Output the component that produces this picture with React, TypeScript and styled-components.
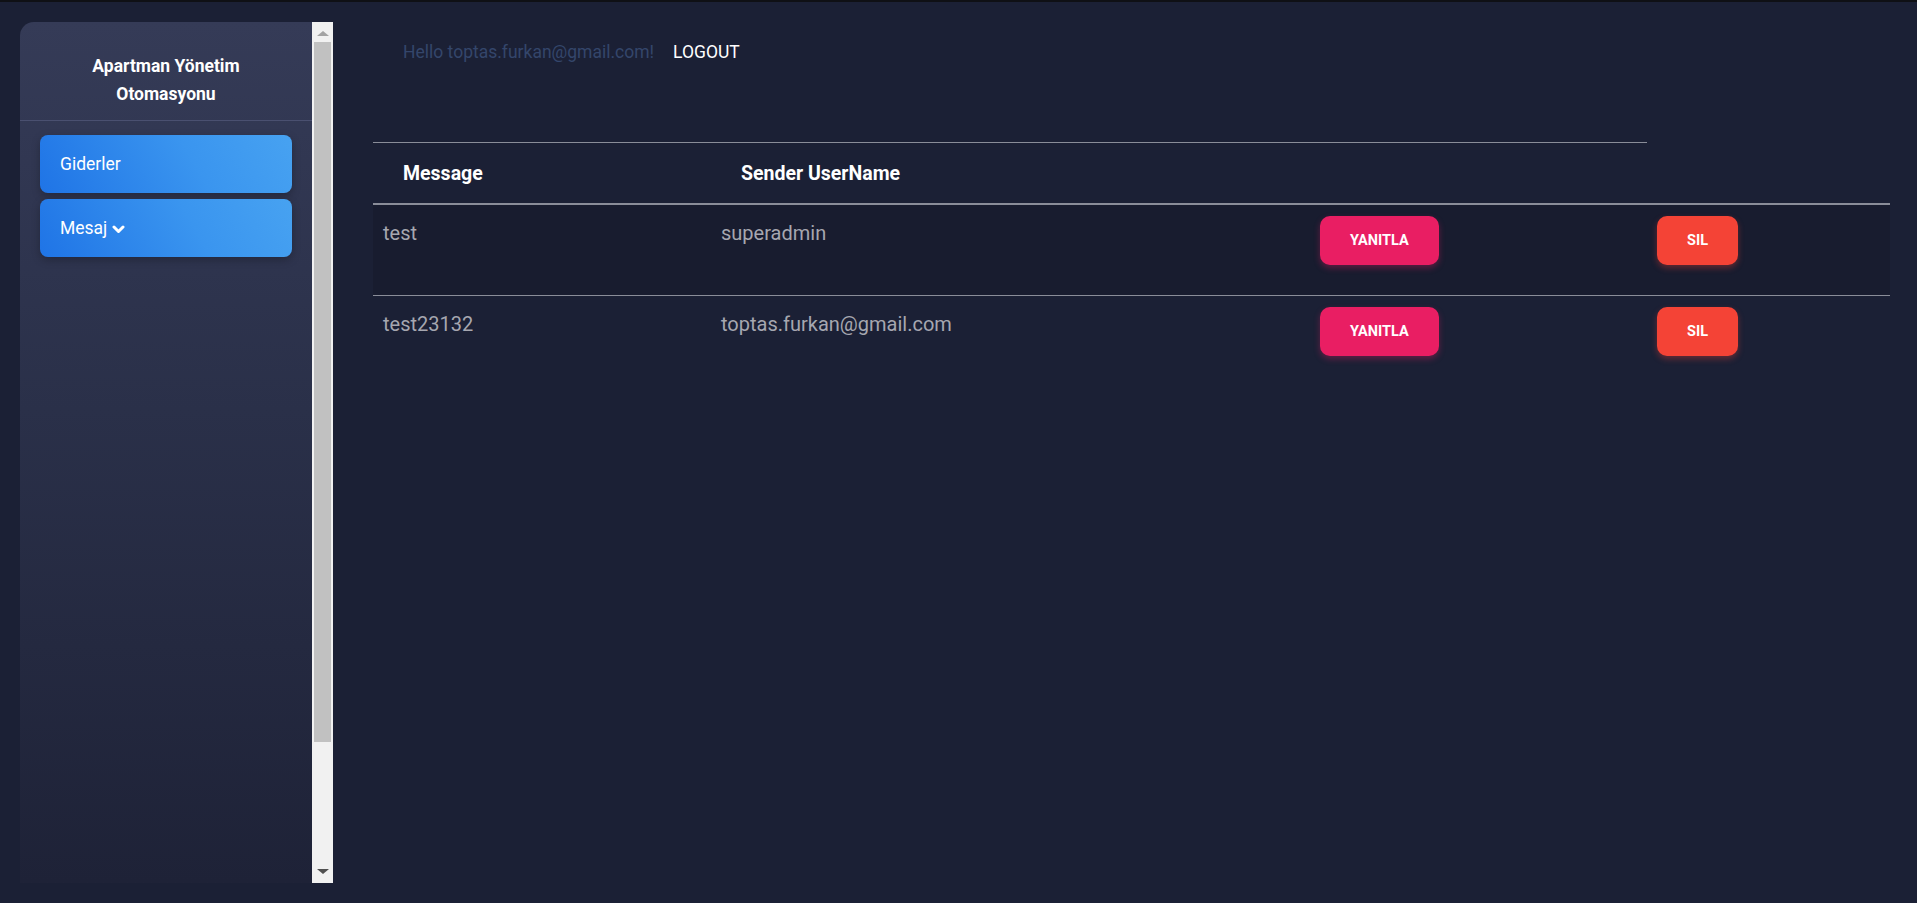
import styled, {createGlobalStyle} from "styled-components";

interface IMessage {
    id: number,
    text: string,
    sender: string
}

const messages: IMessage[] = [
    {id: 1, text: "test", sender: "superadmin"},
    {id: 2, text: "test23132", sender: "toptas.furkan@gmail.com"},
];

const GlobalStyle = createGlobalStyle`
  html, body {
    margin: 0;
    padding: 0;
    height: 100%;
  }

  body {
    background-color: #1b2035;
    font-family: Roboto, "Liberation Sans", sans-serif;
    border-top: 2px solid #0f1015;
    box-sizing: border-box;
  }
`;

const Page = styled.div`
  display: flex;
  height: 901px;
  overflow: hidden;
`;

const SidebarFrame = styled.div`
  display: flex;
  margin: 20px 0 18px 20px;
  height: 861px;
`;

const Sidebar = styled.aside`
  width: 292px;
  background: linear-gradient(180deg, #353b57 0%, #2a3049 45%, #1e2237 100%);
  border-top-left-radius: 14px;
  display: flex;
  flex-direction: column;
`;

const Brand = styled.div`
  color: #ffffff;
  font-weight: 700;
  font-size: 17.5px;
  line-height: 28px;
  text-align: center;
  padding: 30px 30px 12px;
  border-bottom: 1px solid #4a5070;
`;

const Menu = styled.nav`
  display: flex;
  flex-direction: column;
  gap: 6px;
  padding: 14px 20px;
`;

const MenuItem = styled.a`
  display: flex;
  align-items: center;
  gap: 5px;
  height: 58px;
  padding: 0 20px;
  border-radius: 8px;
  color: #ffffff;
  font-size: 17.5px;
  background: linear-gradient(60deg, #1f74e6 0%, #3a95ef 60%, #47a2f1 100%);
  box-shadow: 0 3px 8px rgba(0, 0, 0, 0.25);
  cursor: pointer;
  box-sizing: border-box;
`;

const Chevron = () =>
    <svg width="13" height="9" viewBox="0 0 13 9" style={{marginTop: 2}}>
        <polyline points="2,2 6.5,6.5 11,2" fill="none" stroke="#ffffff" strokeWidth="3"
                  strokeLinecap="round" strokeLinejoin="round"/>
    </svg>;

const ScrollTrack = styled.div`
  width: 21px;
  background: #f1f1f1;
  display: flex;
  flex-direction: column;
  align-items: center;
`;

const Arrow = styled.div<{ down?: boolean }>`
  width: 0;
  height: 0;
  margin: ${p => p.down ? "6px 0 9px" : "9px 0 6px"};
  border-left: 6px solid transparent;
  border-right: 6px solid transparent;
  ${p => p.down ? "border-top: 5px solid #505050;" : "border-bottom: 5px solid #a3a3a3;"}
`;

const Thumb = styled.div`
  width: 17px;
  height: 700px;
  background: #c1c1c1;
`;

const TrackSpacer = styled.div`
  flex: 1;
`;

const Main = styled.main`
  flex: 1;
  padding-left: 40px;
  padding-right: 27px;
  display: flex;
  flex-direction: column;
`;

const TopBar = styled.div`
  display: flex;
  align-items: center;
  gap: 19px;
  height: 100px;
  padding-left: 30px;
  padding-bottom: 1px;
  font-size: 17.5px;
`;

const Hello = styled.span`
  color: #34466b;
`;

const Logout = styled.a`
  color: #ffffff;
  cursor: pointer;
`;

const Spacer = styled.div`
  height: 39px;
`;

const Table = styled.div`
  display: grid;
  grid-template-columns: 338px 599px 337px 1fr;
`;

const HeadCell = styled.div<{ noTop?: boolean }>`
  height: 60px;
  display: flex;
  align-items: center;
  padding: 0 30px;
  color: #ffffff;
  font-weight: 700;
  font-size: 19.5px;
  border-top: 1px solid ${p => p.noTop ? "transparent" : "#8a8d99"};
  border-bottom: 2px solid #8a8d99;
`;

const Cell = styled.div<{ striped?: boolean, last?: boolean }>`
  min-height: 91px;
  box-sizing: border-box;
  padding: 13px 10px;
  color: #a6a7b0;
  font-size: 20px;
  line-height: 30px;
  background: ${p => p.striped ? "#181c2f" : "transparent"};
  border-bottom: 1px solid ${p => p.last ? "transparent" : "#8a8d99"};
`;

const ActionButton = styled.button<{ color: string, shadow: string }>`
  height: 49px;
  margin-top: -2px;
  padding: 0 30px;
  border: none;
  border-radius: 10px;
  background: ${p => p.color};
  color: #ffffff;
  font-family: Roboto, "Liberation Sans", sans-serif;
  font-weight: 700;
  font-size: 14.5px;
  text-transform: uppercase;
  box-shadow: 0 3px 6px ${p => p.shadow};
  cursor: pointer;
`;

const App = () => {
    return <>
        <GlobalStyle/>
        <Page>
            <SidebarFrame>
                <Sidebar>
                    <Brand>Apartman Yönetim<br/>Otomasyonu</Brand>
                    <Menu>
                        <MenuItem>Giderler</MenuItem>
                        <MenuItem>Mesaj <Chevron/></MenuItem>
                    </Menu>
                </Sidebar>
                <ScrollTrack>
                    <Arrow/>
                    <Thumb/>
                    <TrackSpacer/>
                    <Arrow down/>
                </ScrollTrack>
            </SidebarFrame>
            <Main>
                <TopBar>
                    <Hello>Hello toptas.furkan@gmail.com!</Hello>
                    <Logout>LOGOUT</Logout>
                </TopBar>
                <Spacer/>
                <Table>
                    <HeadCell>Message</HeadCell>
                    <HeadCell>Sender UserName</HeadCell>
                    <HeadCell/>
                    <HeadCell noTop/>
                    {messages.map((message, index) => {
                        const striped = index % 2 === 0;
                        const last = index === messages.length - 1;
                        return [
                            <Cell key={`${message.id}/text`} striped={striped} last={last}>{message.text}</Cell>,
                            <Cell key={`${message.id}/sender`} striped={striped} last={last}>{message.sender}</Cell>,
                            <Cell key={`${message.id}/reply`} striped={striped} last={last}>
                                <ActionButton color="#e91e63" shadow="rgba(233, 30, 99, 0.35)">Yanıtla</ActionButton>
                            </Cell>,
                            <Cell key={`${message.id}/delete`} striped={striped} last={last}>
                                <ActionButton color="#f44336" shadow="rgba(244, 67, 54, 0.35)">Sil</ActionButton>
                            </Cell>,
                        ];
                    })}
                </Table>
            </Main>
        </Page>
    </>
};

export default App;
